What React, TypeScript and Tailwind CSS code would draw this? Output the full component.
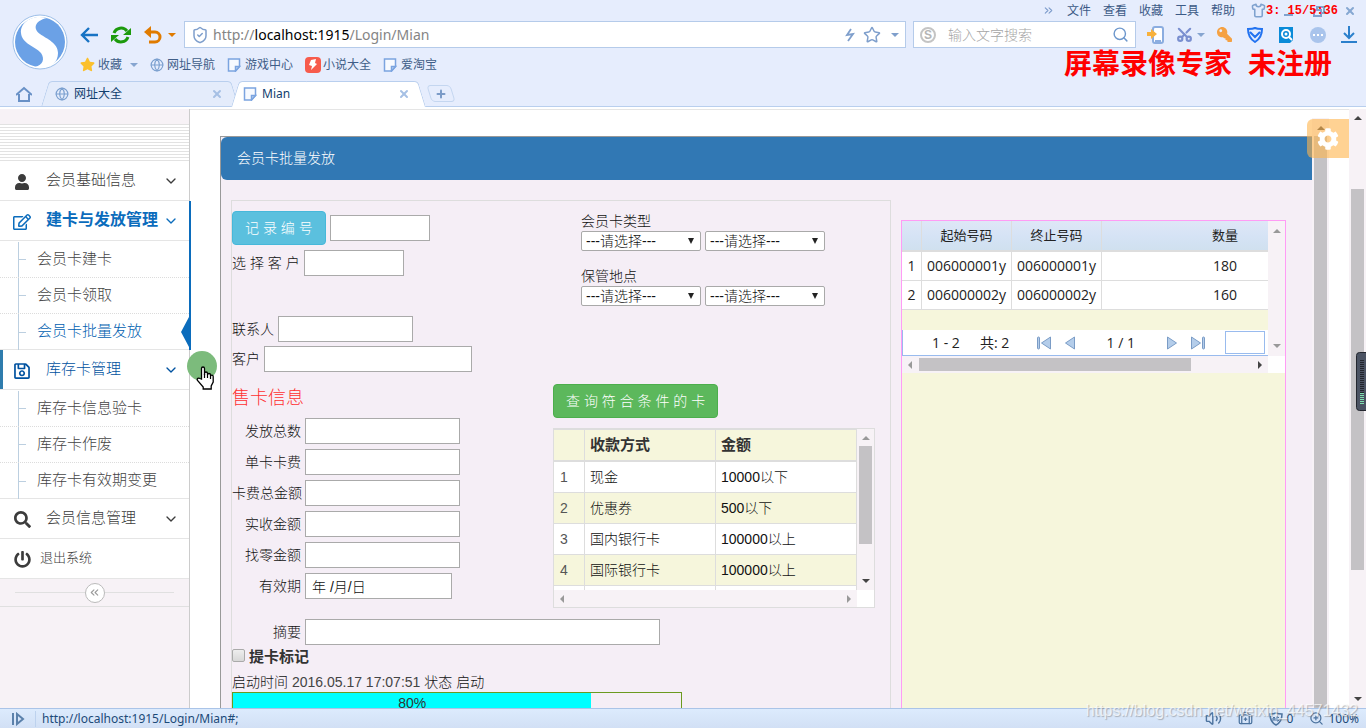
import { ReactNode } from "react";
import {
  ChevronDown,
  ChevronsLeft,
  ChevronsRight,
  Globe,
  Star,
  Search,
  Scissors,
  Shirt,
  X,
  Plus,
  ZoomIn,
  ShieldCheck,
  BriefcaseMedical,
  Volume2,
} from "lucide-react";
import { FaUser, FaSearch, FaPowerOff, FaRegSave, FaRegEdit, FaStar, FaCog, FaKey } from "react-icons/fa";

type Dir = "up" | "down" | "left" | "right";

const arrowPoints: Record<Dir, string> = {
  up: "0,6 4,2 8,6",
  down: "0,2 4,6 8,2",
  left: "6,0 2,4 6,8",
  right: "2,0 6,4 2,8",
};

function Arrow({ dir, className }: { dir: Dir; className?: string }) {
  return (
    <svg viewBox="0 0 8 8" className={`h-2 w-2 shrink-0 fill-current ${className ?? ""}`}>
      <polygon points={arrowPoints[dir]} />
    </svg>
  );
}

const pageLinks = ["文件", "查看", "收藏", "工具", "帮助"];

const payments = [
  { name: "现金", amount: "10000以下" },
  { name: "优惠券", amount: "500以下" },
  { name: "国内银行卡", amount: "100000以上" },
  { name: "国际银行卡", amount: "100000以上" },
];

const cards = [
  { start: "006000001y", end: "006000001y", count: 180 },
  { start: "006000002y", end: "006000002y", count: 160 },
];

const saleFields = ["发放总数", "单卡卡费", "卡费总金额", "实收金额", "找零金额"];

function Logo() {
  return (
    <svg viewBox="0 0 56 56" className="h-14 w-14">
      <circle cx="28" cy="28" r="27" fill="#fff" stroke="#9dbfe8" strokeWidth="1" />
      <circle cx="28" cy="28" r="25" fill="#6ba1e6" />
      <path
        d="M35 4C21 0 8 8 9 19c1 11 14 13 20 20 4 6 2 12-6 14 14 2 23-3 23-14 0-10-11-14-18-19C21 15 22 7 35 4z"
        fill="#fff"
      />
    </svg>
  );
}

function PageIcon() {
  return (
    <svg viewBox="0 0 14 14" className="h-3.5 w-3.5" fill="#f7faff" stroke="#7ba4e0" strokeWidth="1.500">
      <path d="M1.500 1h11v7.500L8.500 13h-7z" />
      <path d="M12.500 8.500h-4V13z" fill="#c7dcf7" />
    </svg>
  );
}

function Menubar() {
  return (
    <div className="flex h-[21px] items-center justify-end gap-3 pr-2.5 text-xs text-[#3c5a86]">
      <ChevronsRight size={13} className="text-[#7d9ccb]" />
      {pageLinks.map((item) => (
        <button key={item}>{item}</button>
      ))}
      <div className="ml-1 flex items-center">
        <Shirt size={15} strokeWidth={2.5} className="text-[#7fa2cf]" />
        <span className="relative font-['Liberation_Mono'] text-xs leading-none font-bold whitespace-pre text-[#ff0000]">
          <svg viewBox="0 0 72 12" className="absolute inset-0 h-3 w-[72px]" fill="none" stroke="#7fa2cf" strokeWidth="2">
            <path d="M18 10h9M48 5h7v6h-7zM51 4V2h7v6h-3" />
          </svg>
          <span className="relative">3: 15/5:36</span>
        </span>
      </div>
      <button aria-label="关闭" className="-ml-1.5">
        <X size={12} strokeWidth={4} className="text-[#86a8d2]" />
      </button>
    </div>
  );
}

function Toolbar() {
  return (
    <div className="flex h-[27px] items-center">
      <button aria-label="后退" className="w-[18px]">
        <svg viewBox="0 0 18 16" className="h-4 w-[18px]" fill="none" stroke="#1873c4" strokeWidth="2.4">
          <path d="M9 1 2 8l7 7M2 8h16" />
        </svg>
      </button>
      <button aria-label="刷新" className="ml-3">
        <svg viewBox="0 0 22 20" className="h-5 w-[22px]">
          <g fill="none" stroke="#1c9a0c" strokeWidth="3">
            <path d="M4 8a7.500 7.500 0 0 1 13-2M18 12a7.500 7.500 0 0 1-13 2" />
          </g>
          <path d="M21 3v7h-8zM1 17v-7h8z" fill="#1c9a0c" />
        </svg>
      </button>
      <button aria-label="撤销" className="ml-3 flex items-center gap-1.5">
        <svg viewBox="0 0 18 18" className="h-[18px] w-[18px]">
          <path d="M4 6h7a5 5 0 0 1 0 10H5" fill="none" stroke="#e07b00" strokeWidth="3" />
          <path d="M0 6l7-6v12z" fill="#e07b00" />
        </svg>
        <Arrow dir="down" className="text-[#e07b00]" />
      </button>
      <label className="ml-2 flex h-[27px] flex-1 items-center border border-[#b5cbea] bg-white px-1.5 text-[#7f9fcc]">
        <ShieldCheck size={18} />
        <span className="ml-1 flex-1 font-['Noto_Sans'] text-sm text-[#858585]">
          http://<span className="text-black">localhost:1915</span>/Login/Mian
        </span>
        <svg viewBox="0 0 10 14" className="h-3.5 w-2.5" fill="none" stroke="currentColor" strokeWidth="1.800">
          <path d="M6 1 2 7l6-1-5 7" />
        </svg>
        <Star size={18} strokeWidth={2} className="ml-2" />
        <Arrow dir="down" className="ml-2.5" />
      </label>
      <label className="mx-[7px] flex h-[27px] w-[223px] items-center border border-[#b5cbea] bg-white px-1.5">
        <span className="flex h-4 w-4 items-center justify-center rounded-full border-2 border-[#c4c4c4] font-['Liberation_Sans'] text-xs font-bold text-[#b5b5b5]">
          S
        </span>
        <input
          aria-label="搜索"
          placeholder="输入文字搜索"
          className="ml-3 w-0 flex-1 text-sm font-light outline-none placeholder:text-[#a5a5a5]"
        />
        <Search size={17} className="text-[#6d97cc]" />
      </label>
      <div className="flex w-[223px] items-center justify-between pr-[9px] pl-1">
        <svg viewBox="0 0 18 18" className="h-[18px] w-[18px]">
          <rect x="6" y="1" width="10" height="16" rx="2" fill="#fff" stroke="#8bade0" strokeWidth="2" />
          <path d="M8 15h6" stroke="#8bade0" strokeWidth="2" />
          <path d="M0 6h4V3l6 5-6 5v-3H0z" fill="#f8b13c" />
        </svg>
        <div className="-ml-1 flex items-center gap-1 text-[#7a8fd0]">
          <Scissors size={17} strokeWidth={3} className="-rotate-90" />
          <Arrow dir="down" className="text-[#86a5d0]" />
        </div>
        <FaKey size={15} className="-ml-1 -scale-x-100 text-[#f5a142]" />
        <svg viewBox="0 0 16 16" className="h-4 w-4" fill="none" stroke="#2373f0" strokeWidth="2">
          <path d="M1 2c3 0 5 0 7-1 2 1 4 1 7 1 0 6-2 10-7 13C3 12 1 8 1 2zM3 5l5 5 5-5" />
        </svg>
        <svg viewBox="0 0 16 16" className="h-4 w-4">
          <path d="M1 0h14v13l-3 3H1z" fill="#0a8bd8" />
          <circle cx="8" cy="7" r="4" fill="#0a8bd8" stroke="#fff" strokeWidth="2" />
          <circle cx="8" cy="7" r="1.500" fill="#fff" />
          <path d="m11 10 3 3" stroke="#fff" strokeWidth="2" />
        </svg>
        <svg viewBox="0 0 16 16" className="h-4 w-4">
          <circle cx="8" cy="8" r="8" fill="#a9c4ec" />
          <path d="M3 7h2v2H3zM7 7h2v2H7zM11 7h2v2h-2z" fill="#fff" />
        </svg>
        <svg viewBox="0 0 16 17" className="h-[17px] w-4" fill="none" stroke="#2b80cc" strokeWidth="2">
          <path d="M8 0v12M3 7l5 5 5-5M0 16h16" />
        </svg>
      </div>
    </div>
  );
}

function Bookmarks() {
  return (
    <nav className="flex h-[33px] items-center text-xs text-[#3f5e88]">
      <FaStar size={15} className="text-[#fbc02d]" />
      <a href="#fav" className="ml-[3px]">收藏</a>
      <Arrow dir="down" className="ml-2 text-[#86a5d0]" />
      <a href="#nav" className="ml-3 flex items-center gap-[3px]">
        <Globe size={14} className="text-[#7ba0cf]" />
        网址导航
      </a>
      <a href="#game" className="ml-3 flex items-center gap-1">
        <PageIcon />
        游戏中心
      </a>
      <a href="#novel" className="ml-3 flex items-center gap-0.5">
        <svg viewBox="0 0 16 16" className="h-4 w-4">
          <rect width="16" height="16" rx="4" fill="#f75b4c" />
          <path d="M6 3l5-1-1 4 2 1-6 6 1-4-3-1z" fill="#fff" />
        </svg>
        小说大全
      </a>
      <a href="#taobao" className="ml-3 flex items-center gap-1">
        <PageIcon />
        爱淘宝
      </a>
      <strong className="mr-[34px] ml-auto flex gap-4 text-[28px] leading-none font-bold text-[#ff0000]">
        <span>屏幕录像专家</span>
        <span>未注册</span>
      </strong>
    </nav>
  );
}

function TabBar() {
  return (
    <div className="flex h-[26px] items-stretch border-b border-[#b9cfee] text-xs text-[#12406e]">
      <a href="#home" aria-label="主页" className="flex w-[45px] items-center pl-4">
        <svg viewBox="0 0 16 16" className="h-4 w-4" fill="none" stroke="#6890c6" strokeWidth="2">
          <path d="M0 9l8-7 8 7M3 8v7h10V8" />
        </svg>
      </a>
      <div className="relative flex w-[190px] items-center px-2.5 before:absolute before:inset-y-0 before:left-0 before:w-3/5 before:-skew-x-[17deg] before:rounded-tl before:border-t before:border-l before:border-[#b9cfee] before:bg-[#e4ecfb] after:absolute after:inset-y-0 after:right-0 after:w-3/5 after:skew-x-[17deg] after:rounded-tr after:border-t after:border-r after:border-[#b9cfee] after:bg-[#e4ecfb]">
        <span className="relative z-10 flex flex-1 items-center gap-[5px]">
          <Globe size={14} className="text-[#7ba0cf]" />
          网址大全
        </span>
        <X size={12} strokeWidth={4} className="relative z-10 mr-0.5 text-[#a6c0e4]" />
      </div>
      <div className="relative -mb-px flex w-[187px] items-center px-2 before:absolute before:inset-y-0 before:left-0 before:z-[1] before:w-3/5 before:-skew-x-[17deg] before:rounded-tl before:border-t before:border-l before:border-[#b9cfee] before:bg-white after:absolute after:inset-y-0 after:right-0 after:z-[1] after:w-3/5 after:skew-x-[17deg] after:rounded-tr after:border-t after:border-r after:border-[#b9cfee] after:bg-white">
        <span className="relative z-10 flex flex-1 items-center gap-[5px] font-['Noto_Sans']">
          <PageIcon />
          Mian
        </span>
        <X size={12} strokeWidth={4} className="relative z-10 mr-1 text-[#a6c0e4]" />
      </div>
      <button aria-label="新标签" className="relative mt-1 mb-1 ml-[7px] flex w-6 items-center justify-center">
        <span className="absolute inset-0 skew-x-[17deg] rounded-sm border border-[#c4d6f0]" />
        <Plus size={12} strokeWidth={4} className="relative text-[#7b9bc8]" />
      </button>
    </div>
  );
}

function MenuItem({ icon, label, className, chevron = true }: { icon: ReactNode; label: string; className?: string; chevron?: boolean }) {
  return (
    <a href="#menu" className={`flex h-10 items-center border-b border-[#e5e5e5] bg-white px-3 ${className ?? "text-[15px] text-[#3c3c3c]"}`}>
      <span className="mt-0.5 flex w-5 justify-center">{icon}</span>
      <span className={`pb-0.5 ${chevron ? "ml-3.5 flex-1" : "ml-2 flex-1"}`}>{label}</span>
      {chevron && <ChevronDown size={16} className="-mr-0.5" />}
    </a>
  );
}

function SubMenu({ items, active }: { items: string[]; active?: string }) {
  return (
    <ul className="border-b border-[#e5e5e5] bg-white pt-px text-[15px] text-[#444]">
      {items.map((item, i) => (
        <li
          key={item}
          className={`relative flex h-9 items-center border-[#dcdcdc] pl-[18px] ${i < items.length - 1 ? "border-b border-dotted" : "-mb-px"}`}
        >
          <span className="h-full border-l border-[#bccfe0]" />
          <span className="w-[7px] border-t border-[#bccfe0]" />
          <a href="#sub" className={`ml-[11px] pb-0.5 ${item === active ? "text-[#0060b0]" : ""}`}>
            {item}
          </a>
          {item === active && (
            <svg viewBox="0 0 8 30" className="absolute right-0 h-[30px] w-2">
              <path d="M8 0v30L0 15z" fill="#0b6cbc" />
            </svg>
          )}
        </li>
      ))}
    </ul>
  );
}

function Sidebar() {
  return (
    <aside className="flex w-[190px] shrink-0 flex-col border-r border-[#ccc] bg-[#f7f2f6] leading-5">
      <div className="mt-[15px] h-[37px] bg-[repeating-linear-gradient(to_bottom,#e2e2e2_0_1px,#fff_1px_3px)]" />
      <MenuItem icon={<FaUser size={16} />} label="会员基础信息" />
      <div className="-mr-0.5 border-r-2 border-[#0b6cbc]">
        <MenuItem icon={<FaRegEdit size={18} />} label="建卡与发放管理" className="text-base font-bold text-[#0b6cbc]" />
        <SubMenu items={["会员卡建卡", "会员卡领取", "会员卡批量发放"]} active="会员卡批量发放" />
      </div>
      <MenuItem
        icon={<FaRegSave size={18} />}
        label="库存卡管理"
        className="text-[15px] text-[#0052a0] shadow-[inset_3px_0_0_#2f7cad]"
      />
      <SubMenu items={["库存卡信息验卡", "库存卡作废", "库存卡有效期变更"]} />
      <MenuItem icon={<FaSearch size={17} />} label="会员信息管理" />
      <MenuItem icon={<FaPowerOff size={17} />} label="退出系统" className="text-[13px] text-[#3c3c3c]" chevron={false} />
      <div className="flex h-7 items-center border-b border-[#e0e0e0] px-[15px]">
        <span className="flex-1 border-t border-[#e0e0e0]" />
        <button aria-label="收起" className="flex h-5 w-5 items-center justify-center rounded-full border border-[#bbb] bg-white text-[#999]">
          <ChevronsLeft size={13} />
        </button>
        <span className="flex-1 border-t border-[#e0e0e0]" />
      </div>
    </aside>
  );
}

function Field({ id, label, width, className }: { id: string; label: string; width: string; className?: string }) {
  return (
    <div className={`flex items-center gap-1 ${className ?? ""}`}>
      <label htmlFor={id}>{label}</label>
      <input id={id} className={`h-[26px] border border-[#aaa] bg-white px-1.5 ${width}`} />
    </div>
  );
}

function Choice({ label }: { label: string }) {
  return (
    <span className="relative">
      <select aria-label={label} className="block h-5 w-[120px] appearance-none rounded-xs border border-[#a9a9a9] bg-white pl-1 leading-4">
        <option>---请选择---</option>
      </select>
      <svg viewBox="0 0 8 8" className="pointer-events-none absolute top-1.5 right-1.5 h-2 w-2">
        <path d="M1 1h6L4 7z" fill="#222" />
      </svg>
    </span>
  );
}

function PaymentTable() {
  return (
    <div className="mt-2.5 flex h-[180px] w-[322px] border border-[#ddd] bg-white">
      <div className="flex w-[303px] flex-col">
        <div className="h-[161px] overflow-hidden">
          <table className="w-full table-fixed border-separate border-spacing-0">
            <thead>
              <tr className="h-[33px] bg-[#f6f6dc] text-left text-[15px] text-[#333]">
                <th className="w-[31px] border-t border-r border-b-2 border-[#ddd]" />
                <th className="w-[131px] border-t border-r border-b-2 border-[#ddd] px-[5px]">收款方式</th>
                <th className="border-t border-r border-b-2 border-[#ddd] px-[5px]">金额</th>
              </tr>
            </thead>
            <tbody>
              {payments.map((row, i) => (
                <tr key={row.name} className="h-[31px] even:bg-[#f6f6dc]">
                  <td className="border-r border-b border-[#ddd] px-1.5 text-[#555]">{i + 1}</td>
                  <td className="border-r border-b border-[#ddd] px-[5px]">{row.name}</td>
                  <td className="border-r border-b border-[#ddd] px-[5px]">{row.amount}</td>
                </tr>
              ))}
              <tr className="h-[31px]">
                <td className="border-r border-[#ddd]" />
                <td className="border-r border-[#ddd]" />
                <td className="border-r border-[#ddd]" />
              </tr>
            </tbody>
          </table>
        </div>
        <div className="flex flex-1 items-center justify-between bg-[#f7f2f6] px-1 text-[#999]">
          <Arrow dir="left" />
          <Arrow dir="right" />
        </div>
      </div>
      <div className="mb-[17px] flex flex-1 flex-col items-center justify-between bg-[#f7f2f6] py-[5px] text-[#999]">
        <Arrow dir="up" />
        <span className="mt-1 mb-auto h-[98px] w-[13px] bg-[#c4c2c5]" />
        <Arrow dir="down" className="text-[#444]" />
      </div>
    </div>
  );
}

function IssueForm() {
  return (
    <form className="min-w-0 flex-1 overflow-hidden border-x border-t border-[#ddd] whitespace-nowrap">
      <div className="flex pt-2.5">
        <div className="w-[349px]">
          <div className="flex items-center gap-1">
            <button type="button" className="h-[34px] rounded border border-[#46b8da] bg-[#5bc0de] px-3 text-white">
              记 录 编 号
            </button>
            <input aria-label="记录编号" className="h-[26px] w-[100px] border border-[#aaa] bg-white" />
          </div>
          <Field id="pick" label="选 择 客 户" width="w-[100px]" className="mt-[5px]" />
          <Field id="contact" label="联系人" width="w-[135px]" className="mt-10" />
          <Field id="customer" label="客户" width="w-[208px]" className="mt-1" />
        </div>
        <div>
          <p>会员卡类型</p>
          <div className="flex gap-1">
            <Choice label="会员卡类型" />
            <Choice label="会员卡子类型" />
          </div>
          <p className="mt-[15px]">保管地点</p>
          <div className="flex gap-1">
            <Choice label="保管地点" />
            <Choice label="保管位置" />
          </div>
        </div>
      </div>

      <div className="mt-3 flex">
        <div className="w-[321px]">
          <h2 className="text-lg leading-7 text-[#ff3030]">售卡信息</h2>
          <div className="mt-1.5 flex flex-col gap-[5px]">
            {saleFields.map((label, i) => (
              <div key={label} className="flex items-center gap-1">
                <label htmlFor={`sale-${i}`} className="w-[69px] text-right">{label}</label>
                <input id={`sale-${i}`} className="h-[26px] w-[155px] border border-[#aaa] bg-white" />
              </div>
            ))}
            <div className="flex items-center gap-1">
              <label htmlFor="expire" className="w-[69px] text-right">有效期</label>
              <input id="expire" defaultValue="年 /月/日" className="h-[26px] w-[147px] border border-[#aaa] bg-white px-1.5" />
            </div>
          </div>
        </div>
        <div>
          <button type="button" className="block h-[34px] rounded border border-[#4cae4c] bg-[#5cb85c] px-3 text-white">
            查 询 符 合 条 件 的 卡
          </button>
          <PaymentTable />
        </div>
      </div>

      <div className="mt-[11px] flex items-center gap-1">
        <label htmlFor="summary" className="w-[69px] text-right">摘要</label>
        <input id="summary" className="h-[26px] w-[355px] border border-[#aaa] bg-white" />
      </div>
      <label className="flex h-6 items-center gap-1 text-[15px] font-bold text-[#333]">
        <input
          type="checkbox"
          className="mb-1 h-[13px] w-[13px] appearance-none rounded-xs border border-[#aaa] bg-linear-to-b from-[#eee] to-[#d8d8d8]"
        />
        提卡标记
      </label>
      <p className="mt-[3px]">
        启动时间 <span className="text-[#444]">2016.05.17 17:07:51</span> 状态 启动
      </p>
      <div className="h-6 w-[450px] border border-[#6b9a1f]">
        <div className="h-full w-4/5 bg-[#00ffff] text-center text-[#333]">80%</div>
      </div>
    </form>
  );
}

function PagerArrow({ back, bar }: { back?: boolean; bar?: boolean }) {
  return (
    <svg
      viewBox={bar ? "0 0 14 14" : "0 0 10 14"}
      className={`block h-3.5 ${bar ? "w-3.5" : "w-2.5"} ${back ? "-scale-x-100" : ""}`}
      fill="#b4cdea"
      stroke="#7b9cc6"
    >
      <path d="M.5 1v12l9-6z" />
      {bar && <rect x="11.500" y="1" width="2" height="12" rx="1" />}
    </svg>
  );
}

function CardPanel() {
  return (
    <section className="mt-5 mr-[26px] ml-2.5 flex w-[385px] shrink-0 flex-col border-x border-t border-[#ff9cf5] bg-[#f6f6dc] font-['Open_Sans','Noto_Sans_CJK_SC',sans-serif] text-sm font-normal text-[#222]">
      <div className="flex">
        <div className="w-[366px] overflow-hidden">
          <table className="w-[446px] table-fixed border-separate border-spacing-0 text-center">
            <thead>
              <tr className="h-[31px] bg-linear-to-b from-[#dfe7f7] via-[#d5e3f5] to-[#cfe0ee] text-[13px]">
                <th className="w-5 border-r border-b-2 border-[#ddd]" />
                <th className="w-[90px] border-r border-b-2 border-[#ddd] font-normal">起始号码</th>
                <th className="w-[90px] border-r border-b-2 border-[#ddd] font-normal">终止号码</th>
                <th className="border-b-2 border-[#ddd] font-normal">数量</th>
              </tr>
            </thead>
            <tbody className="bg-white">
              {cards.map((card, i) => (
                <tr key={card.start} className="h-[29px]">
                  <td className="border-r border-b border-[#ddd]">{i + 1}</td>
                  <td className="border-r border-b border-[#ddd]">{card.start}</td>
                  <td className="border-r border-b border-[#ddd]">{card.end}</td>
                  <td className="border-b border-[#ddd]">{card.count}</td>
                </tr>
              ))}
            </tbody>
          </table>
          <div className="mt-5 flex h-[26px] items-center border-b border-l border-[#99bbee] bg-white pr-[3px] pl-[29px]">
            <span className="w-12">1 - 2</span>
            <span className="flex-1">共: 2</span>
            <button aria-label="首页" className="mr-3.5"><PagerArrow back bar /></button>
            <button aria-label="上一页"><PagerArrow back /></button>
            <span className="mx-8">1 / 1</span>
            <button aria-label="下一页" className="mr-3.5"><PagerArrow /></button>
            <button aria-label="末页" className="mr-5"><PagerArrow bar /></button>
            <input aria-label="页码" className="h-[23px] w-10 border border-[#99bbee] bg-white" />
          </div>
        </div>
        <div className="flex flex-1 flex-col items-center justify-between bg-[#f7f2f6] py-1.5 text-[#999]">
          <Arrow dir="up" />
          <Arrow dir="down" />
        </div>
      </div>
      <div className="flex h-[17px] bg-white">
        <div className="flex w-[366px] items-center bg-[#f7f2f6] px-1 text-[#999]">
          <Arrow dir="left" />
          <span className="mr-auto ml-[5px] h-[13px] w-[272px] bg-[#c4c2c5]" />
          <Arrow dir="right" className="text-[#444]" />
        </div>
      </div>
    </section>
  );
}

function Gear() {
  return (
    <button aria-label="设置" className="absolute top-2.5 right-[17px] flex h-[39px] w-[42px] items-center justify-center rounded-l-md bg-[#ffb44b]/60 text-white">
      <FaCog size={22} />
    </button>
  );
}

function Meter() {
  return (
    <svg viewBox="0 0 10 60" className="absolute top-[243px] right-0 h-[60px] w-2.5">
      <rect x="0.500" y="0.500" width="14" height="58" rx="3" fill="#4b5363" stroke="#23262e" />
      <path d="M6 8v33" stroke="#22252c" strokeWidth="4" strokeDasharray="1 1" />
      <path d="M6 41v12" stroke="#7fe0b0" strokeWidth="4" strokeDasharray="1 1" />
    </svg>
  );
}

function Pointer() {
  return (
    <div className="pointer-events-none absolute top-[242px] left-[187px] z-20">
      <div className="h-[30px] w-[30px] rounded-full bg-[#7cbb7c]" />
      <svg viewBox="0 0 18 24" className="absolute top-[15px] left-[9px] h-6 w-[18px]">
        <path
          d="M5.500 13V2.500a1.500 1.500 0 0 1 3 0V9V7.500a1.500 1.500 0 0 1 3 0V9a1.500 1.500 0 0 1 3 0v1a1.400 1.400 0 0 1 2.700.500V16l-2 4v3h-8v-2L1.500 14.500c-1-2 1-3 2.500-2z"
          fill="#fff"
          stroke="#000"
          strokeWidth="1.300"
        />
        <path d="M8.500 8v4M11.500 9v3M14.500 10v3" stroke="#000" strokeWidth="1.200" />
      </svg>
    </div>
  );
}

function StatusBar() {
  return (
    <footer className="relative flex h-5 shrink-0 items-center border-t border-[#aac4e8] bg-linear-to-b from-[#dcebfd] to-[#d2e0f5] pr-[7px] font-['Noto_Sans'] text-xs font-normal text-[#1c4a78]">
      <svg viewBox="0 0 14 14" className="ml-[11px] h-3.5 w-3.5" fill="none" stroke="#5b81ab" strokeWidth="2">
        <path d="M2 1v12M6 2v10l6-5z" />
      </svg>
      <span className="ml-[10px] border-l border-[#bdd2ee] pl-1.5">http://localhost:1915/Login/Mian#;</span>
      <div className="ml-auto flex items-center text-[#4c739f]">
        <Volume2 size={17} />
        <BriefcaseMedical size={15} className="mx-4" />
        <svg viewBox="0 0 14 14" className="h-3.5 w-3.5" fill="none" stroke="currentColor" strokeWidth="1.500">
          <path d="M1 2c2 0 4 0 6-1 2 1 4 1 6 1 0 6-2 9-6 11C3 11 1 8 1 2z" />
          <path d="M4 9V6l1-1 1 1v3M4 7h2M8 5h1l1 1v2L9 9H8z" strokeWidth="1" />
        </svg>
        <span className="mr-4 ml-1 text-[#1c4a78]">0</span>
        <ZoomIn size={15} />
        <span className="ml-1 text-[#1c4a78]">100%</span>
      </div>
      <span className="pointer-events-none absolute -top-2.5 right-2 font-['Liberation_Sans'] text-base text-white/70 [text-shadow:1px_1px_1px_rgba(120,120,120,0.5)]">
        https://blog.csdn.net/weixin_44571432
      </span>
    </footer>
  );
}

export default function App() {
  return (
    <div className="flex h-screen flex-col overflow-hidden bg-white font-['Liberation_Sans','Noto_Sans_CJK_SC',sans-serif] text-sm text-[#333]">
      <header className="shrink-0 bg-[#e6edfd]">
        <div className="flex">
          <div className="w-20 shrink-0 pt-3.5 pl-3">
            <Logo />
          </div>
          <div className="min-w-0 flex-1">
            <Menubar />
            <Toolbar />
            <Bookmarks />
          </div>
        </div>
        <TabBar />
      </header>

      <main className="relative mt-0.5 flex min-h-0 flex-1 font-light text-[#111]">
        <Sidebar />
        <div className="flex min-w-0 flex-1 border-t border-[#e5e5e5] pl-[30px]">
          <div className="mt-[26px] flex min-w-0 flex-1 flex-col border-t border-l border-[#999] bg-[#f5eef6]">
            <h1 className="h-[43px] shrink-0 rounded-l-md bg-[#3178b4] px-4 leading-[43px] font-light text-white">会员卡批量发放</h1>
            <div className="flex min-h-0 flex-1 pl-2.5">
              <div className="flex min-w-0 flex-1 pt-5">
                <IssueForm />
              </div>
              <div className="flex pt-5">
                <CardPanel />
              </div>
            </div>
          </div>
          <div className="mt-2 mr-5 flex w-[17px] flex-col items-center bg-[#f7f2f6] pt-1.5 text-[#444]">
            <Arrow dir="up" />
            <span className="mt-1 w-[13px] flex-1 bg-[#c4c2c5]" />
          </div>
        </div>
        <div className="flex w-[17px] flex-col items-center bg-[#f7f2f6] py-[5px] text-[#444]">
          <Arrow dir="up" />
          <span className="mt-[67px] mb-auto h-[381px] w-[13px] bg-[#c4c2c5]" />
          <Arrow dir="down" />
        </div>
        <Gear />
        <Meter />
        <Pointer />
      </main>
      <StatusBar />
    </div>
  );
}
